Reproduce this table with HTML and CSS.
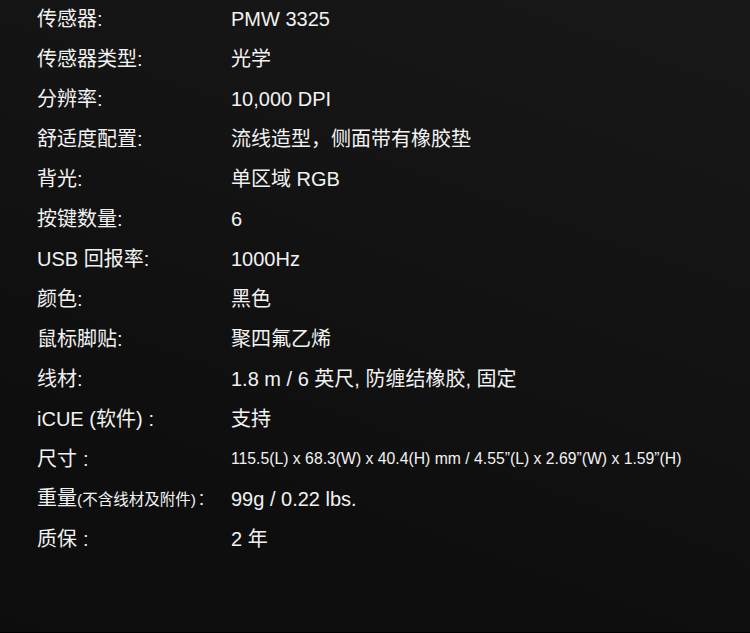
FILE: index.html
```html
<!DOCTYPE html>
<html lang="zh-CN">
<head>
<meta charset="utf-8">
<title>规格</title>
<link rel="stylesheet" href="styles.css">
</head>
<body>
<div class="page">
  <dl class="specs">
    <div class="row"><dt>传感器:</dt><dd>PMW 3325</dd></div>
    <div class="row"><dt>传感器类型:</dt><dd>光学</dd></div>
    <div class="row"><dt>分辨率:</dt><dd>10,000 DPI</dd></div>
    <div class="row"><dt>舒适度配置:</dt><dd>流线造型，侧面带有橡胶垫</dd></div>
    <div class="row"><dt>背光:</dt><dd>单区域 RGB</dd></div>
    <div class="row"><dt>按键数量:</dt><dd>6</dd></div>
    <div class="row"><dt>USB 回报率:</dt><dd>1000Hz</dd></div>
    <div class="row"><dt>颜色:</dt><dd>黑色</dd></div>
    <div class="row"><dt>鼠标脚贴:</dt><dd>聚四氟乙烯</dd></div>
    <div class="row"><dt>线材:</dt><dd>1.8 m / 6 英尺, 防缠结橡胶, 固定</dd></div>
    <div class="row"><dt>iCUE (软件)<span class="fw">:</span></dt><dd>支持</dd></div>
    <div class="row"><dt>尺寸<span class="fw">:</span></dt><dd class="small">115.5(L) x 68.3(W) x 40.4(H) mm / 4.55”(L) x 2.69”(W) x 1.59”(H)</dd></div>
    <div class="row"><dt>重量<span class="note">(不含线材及附件)</span><span class="sep">:</span></dt><dd>99g / 0.22 lbs.</dd></div>
    <div class="row"><dt>质保<span class="fw">:</span></dt><dd>2 年</dd></div>
  </dl>
</div>
</body>
</html>
```

FILE: styles.css
```css
html, body {
  margin: 0;
  padding: 0;
  height: 100%;
}
body {
  background: #0e0e0e;
  font-family: "Liberation Sans", "Noto Sans CJK SC", sans-serif;
  color: #f2f2f2;
}
.page {
  height: 632px;
  border-bottom: 1px solid #000;
  background: linear-gradient(200deg, #181818 0%, #131313 40%, #0e0e0e 75%, #0d0d0d 100%);
  overflow: hidden;
}
.specs {
  margin: -1px 0 0 0;
  padding: 0 0 0 37px;
}
.row {
  display: flex;
  align-items: center;
  height: 40px;
}
dt {
  width: 194px;
  flex: none;
  font-size: 20px;
  line-height: 40px;
  white-space: nowrap;
}
dd {
  margin: 0;
  font-size: 20px;
  line-height: 40px;
  white-space: nowrap;
}
.fw {
  padding-left: 6px;
}
.sep {
  padding-left: 3px;
}
.small {
  font-size: 15.75px;
}
.note {
  font-size: 15.5px;
}
```
